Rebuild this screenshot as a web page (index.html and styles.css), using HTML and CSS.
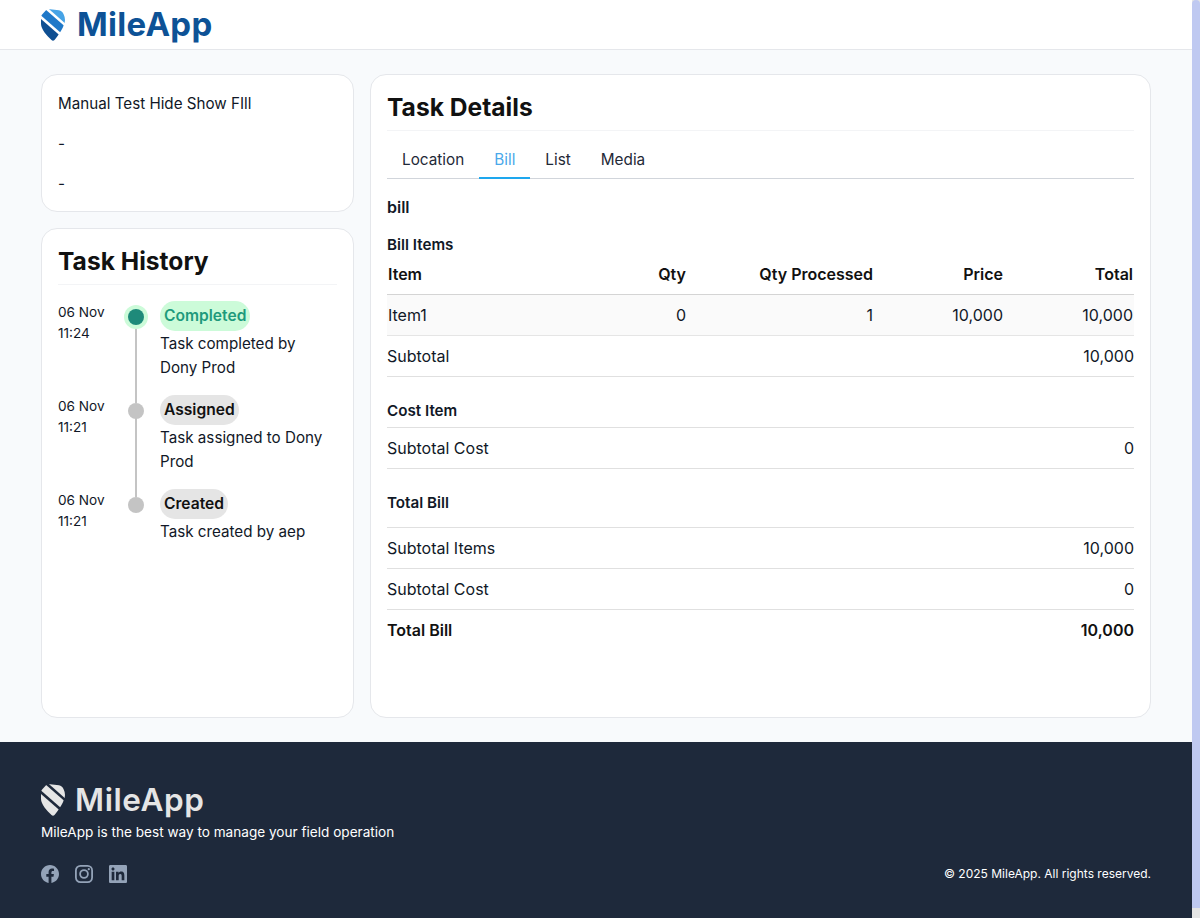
FILE: index.html
```html
<!DOCTYPE html>
<html lang="en">
<head>
<meta charset="utf-8">
<title>MileApp - Task Details</title>
<link rel="stylesheet" href="styles.css">
</head>
<body>
<div class="shell">
  <div class="page">
    <header class="topbar">
      <a class="brand brand-blue">
        <svg class="brand-mark" viewBox="0 0 24 32" aria-hidden="true">
          <defs>
            <clipPath id="pinA"><path d="M5 1.2Q7 0 9 0.3L18 1.2Q21 1.6 22.5 5Q24 8 24 11C24 17 17 27 13.5 31Q12 32.5 10.5 31C6 27 0 20 0 15V8.5Q0 6 2 4.5Z"/></clipPath>
          </defs>
          <g clip-path="url(#pinA)" fill="none">
            <line x1="-10" y1="-22.4" x2="34" y2="16.3" stroke="#46a3e6" stroke-width="10"/>
            <line x1="-10" y1="-7.3" x2="34" y2="31.4" stroke="#1f78c8" stroke-width="7.5"/>
            <line x1="-10" y1="7.8" x2="34" y2="46.5" stroke="#0f4f92" stroke-width="10"/>
          </g>
        </svg>
        <span class="brand-name">MileApp</span>
      </a>
    </header>

    <main class="content">
      <div class="side">
        <section class="card summary">
          <p>Manual Test Hide Show FIll</p>
          <p>-</p>
          <p>-</p>
        </section>
        <section class="card history">
          <h2 class="card-title">Task History</h2>
          <ol class="timeline">
            <li class="event">
              <div class="event-time">06 Nov<br>11:24</div>
              <div class="event-track"><span class="dot dot-done"></span></div>
              <div class="event-body">
                <span class="pill pill-done">Completed</span>
                <p>Task completed by Dony Prod</p>
              </div>
            </li>
            <li class="event">
              <div class="event-time">06 Nov<br>11:21</div>
              <div class="event-track"><span class="dot"></span></div>
              <div class="event-body">
                <span class="pill">Assigned</span>
                <p>Task assigned to Dony Prod</p>
              </div>
            </li>
            <li class="event event-last">
              <div class="event-time">06 Nov<br>11:21</div>
              <div class="event-track"><span class="dot"></span></div>
              <div class="event-body">
                <span class="pill">Created</span>
                <p>Task created by aep</p>
              </div>
            </li>
          </ol>
        </section>
      </div>

      <section class="card details">
        <h2 class="card-title">Task Details</h2>
        <nav class="tabs">
          <a class="tab">Location</a>
          <a class="tab tab-active">Bill</a>
          <a class="tab">List</a>
          <a class="tab">Media</a>
        </nav>
        <h3 class="bill-name">bill</h3>
        <h4 class="group-title group-items">Bill Items</h4>
        <table class="items">
          <colgroup>
            <col class="col-item"><col class="col-qty"><col class="col-proc"><col class="col-price"><col class="col-total">
          </colgroup>
          <thead>
            <tr><th>Item</th><th>Qty</th><th>Qty Processed</th><th>Price</th><th>Total</th></tr>
          </thead>
          <tbody>
            <tr><td>Item1</td><td>0</td><td>1</td><td>10,000</td><td>10,000</td></tr>
          </tbody>
        </table>
        <div class="row"><span>Subtotal</span><span>10,000</span></div>

        <h4 class="group-title group-cost">Cost Item</h4>
        <div class="row row-top"><span>Subtotal Cost</span><span>0</span></div>

        <h4 class="group-title group-total">Total Bill</h4>
        <div class="row row-top"><span>Subtotal Items</span><span>10,000</span></div>
        <div class="row"><span>Subtotal Cost</span><span>0</span></div>
        <div class="row row-strong"><span>Total Bill</span><span>10,000</span></div>
      </section>
    </main>

    <footer class="footer">
      <a class="brand brand-light">
        <svg class="brand-mark" viewBox="0 0 24 32" aria-hidden="true">
          <defs>
            <clipPath id="pinB"><path d="M5 1.2Q7 0 9 0.3L18 1.2Q21 1.6 22.5 5Q24 8 24 11C24 17 17 27 13.5 31Q12 32.5 10.5 31C6 27 0 20 0 15V8.5Q0 6 2 4.5Z"/></clipPath>
          </defs>
          <g clip-path="url(#pinB)" fill="none" stroke="#e5e5e5">
            <line x1="-10" y1="-22.4" x2="34" y2="16.3" stroke-width="10"/>
            <line x1="-10" y1="-7.3" x2="34" y2="31.4" stroke-width="7.5"/>
            <line x1="-10" y1="7.8" x2="34" y2="46.5" stroke-width="10"/>
          </g>
        </svg>
        <span class="brand-name">MileApp</span>
      </a>
      <p class="tagline">MileApp is the best way to manage your field operation</p>
      <div class="footer-bottom">
        <div class="socials">
          <svg class="social" viewBox="0 0 24 24" aria-label="Facebook"><path d="M24 12.073c0-6.627-5.373-12-12-12s-12 5.373-12 12c0 5.99 4.388 10.954 10.125 11.854v-8.385H7.078v-3.47h3.047V9.43c0-3.007 1.792-4.669 4.533-4.669 1.312 0 2.686.235 2.686.235v2.953H15.83c-1.491 0-1.956.925-1.956 1.874v2.25h3.328l-.532 3.47h-2.796v8.385C19.612 23.027 24 18.062 24 12.073z"/></svg>
          <svg class="social" viewBox="0 0 24 24" aria-label="Instagram"><rect class="social-line" x="1.2" y="1.2" width="21.6" height="21.6" rx="6"/><circle class="social-line" cx="12" cy="12" r="5.2"/><circle cx="18.4" cy="5.6" r="1.5"/></svg>
          <svg class="social" viewBox="0 0 24 24" aria-label="LinkedIn"><path d="M20.447 20.452h-3.554v-5.569c0-1.328-.027-3.037-1.852-3.037-1.853 0-2.136 1.445-2.136 2.939v5.667H9.351V9h3.414v1.561h.046c.477-.9 1.637-1.85 3.37-1.85 3.601 0 4.267 2.37 4.267 5.455v6.286zM5.337 7.433c-1.144 0-2.063-.926-2.063-2.065 0-1.138.92-2.063 2.063-2.063 1.14 0 2.064.925 2.064 2.063 0 1.139-.925 2.065-2.064 2.065zm1.782 13.019H3.555V9h3.564v11.452zM22.225 0H1.771C.792 0 0 .774 0 1.729v20.542C0 23.227.792 24 1.771 24h20.451C23.2 24 24 23.227 24 22.271V1.729C24 .774 23.2 0 22.222 0h.003z"/></svg>
        </div>
        <p class="copyright">© 2025 MileApp. All rights reserved.</p>
      </div>
    </footer>
  </div>
  <aside class="scrollbar"><div class="scrollbar-thumb"></div></aside>
</div>
</body>
</html>
```
FILE: styles.css
```css
* { box-sizing: border-box; }
html, body { margin: 0; padding: 0; height: 100%; }
body {
  font-family: Inter, "Liberation Sans", sans-serif;
  font-size: 16px;
  line-height: 24px;
  color: #111827;
  background: #fff;
  overflow: hidden;
}
p, h2, h3, h4, ol { margin: 0; padding: 0; }
ol { list-style: none; }

.shell { display: flex; height: 918px; }
.page { width: 1192px; display: flex; flex-direction: column; }

.scrollbar { width: 8px; height: 918px; background: #e5e5e5; }
.scrollbar-thumb { height: 908px; background: #bfc9f1; border-radius: 4px 4px 0 0; }

.topbar {
  height: 50px;
  padding: 0 41px;
  display: flex;
  align-items: center;
  background: #fff;
  border-bottom: 1px solid #e5e7eb;
}

.brand { display: flex; align-items: center; gap: 12px; }
.brand-mark { width: 24px; height: 32px; flex: none; }
.brand-name { font-weight: 700; font-size: 33px; line-height: 36px; letter-spacing: 0.3px; }
.brand-blue .brand-name { color: #0d5296; margin-bottom: 2px; }
.brand-light { gap: 10px; }
.brand-light .brand-name { color: #e5e5e5; font-size: 31.5px; font-weight: 600; letter-spacing: 0.6px; }

.content {
  flex: 1;
  display: grid;
  grid-template-columns: 313px 781px;
  gap: 16px;
  padding: 24px 41px;
  background: #f8fafc;
}
.side { display: flex; flex-direction: column; gap: 16px; }

.card {
  background: #fff;
  border: 1px solid #e5e7eb;
  border-radius: 16px;
  padding: 16px;
}
.summary { display: flex; flex-direction: column; gap: 16px; font-size: 15.2px; padding: 17px 16px 15px; }
.history { flex: 1; }

.card-title {
  font-size: 24.6px;
  line-height: 32px;
  font-weight: 700;
  padding-bottom: 7px;
  border-bottom: 1px solid #f3f4f6;
  color: #111;
}

.timeline { margin-top: 17px; }
.event {
  display: grid;
  grid-template-columns: 66px 24px 1fr;
  padding-bottom: 16px;
}
.event-last { padding-bottom: 0; }
.event-time { font-size: 13.6px; line-height: 21px; }
.event-track { position: relative; display: flex; justify-content: center; padding-top: 7px; }
.event-track::after {
  content: "";
  position: absolute;
  top: 15px;
  bottom: -23px;
  left: 11px;
  width: 2px;
  background: #c4c4c4;
}
.event-last .event-track::after { display: none; }
.dot {
  position: relative;
  z-index: 1;
  width: 16px;
  height: 16px;
  border-radius: 50%;
  background: #c4c4c4;
}
.dot-done { background: #1e8a7a; box-shadow: 0 0 0 4px #ccfbd9; }
.event-body { padding-left: 12px; margin-top: -1px; font-size: 15.2px; }
.event-body p { padding-top: 1px; }
.pill {
  display: inline-block;
  height: 30px;
  padding: 3px 4px;
  border-radius: 15px;
  background: #e5e5e5;
  font-size: 15.6px;
  font-weight: 600;
  color: #111;
}
.pill-done { background: #ccfbd9; color: #1e9a7c; }

.tabs { display: flex; height: 48px; border-bottom: 1px solid #d1d5db; }
.tab {
  padding: 17px 15px 0;
  font-size: 15.3px;
  color: #1f2937;
  height: 48px;
}
.tab-active { color: #4aa8ea; border-bottom: 2px solid #1ea7ee; }
.bill-name { margin-top: 16px; font-size: 16px; font-weight: 600; color: #111827; }
.group-title { font-size: 15.2px; line-height: 20px; font-weight: 600; color: #111827; }
.group-items { margin-top: 16px; line-height: 19px; }
.group-cost { margin-top: 24px; margin-bottom: 6px; }
.group-total { margin-top: 24px; margin-bottom: 14px; }

.items { width: 747px; border-collapse: collapse; table-layout: fixed; }
.col-item { width: 200px; }
.col-qty { width: 100px; }
.col-proc { width: 187px; }
.col-price { width: 130px; }
.col-total { width: 130px; }
.items th, .items td { padding: 8px 1px; text-align: right; font-size: 16px; line-height: 24px; }
.items th { font-weight: 600; color: #111; }
.items th:first-child, .items td:first-child { text-align: left; }
.items thead tr { border-bottom: 1px solid #d4d4d4; }
.items tbody tr { background: #fafafa; border-bottom: 1px solid #e5e5e5; }

.row {
  display: flex;
  justify-content: space-between;
  padding: 8px 0;
  border-bottom: 1px solid #e0e0e0;
  color: #111827;
}
.row-top { border-top: 1px solid #e0e0e0; }
.row-strong { border-bottom: 0; font-weight: 600; color: #111; }

.footer {
  height: 176px;
  padding: 40px 41px 0;
  background: #1e293b;
  color: #fff;
}
.tagline { margin-top: 4px; font-size: 13.6px; line-height: 21px; font-weight: 400; }
.footer-bottom {
  margin-top: 22px;
  display: flex;
  justify-content: space-between;
  align-items: center;
}
.socials { display: flex; gap: 16px; }
.social { width: 18px; height: 18px; fill: #94a3b8; }
.social-line { fill: none; stroke: #94a3b8; stroke-width: 2.4; }
.copyright { font-size: 12px; line-height: 18px; font-weight: 400; }
```
